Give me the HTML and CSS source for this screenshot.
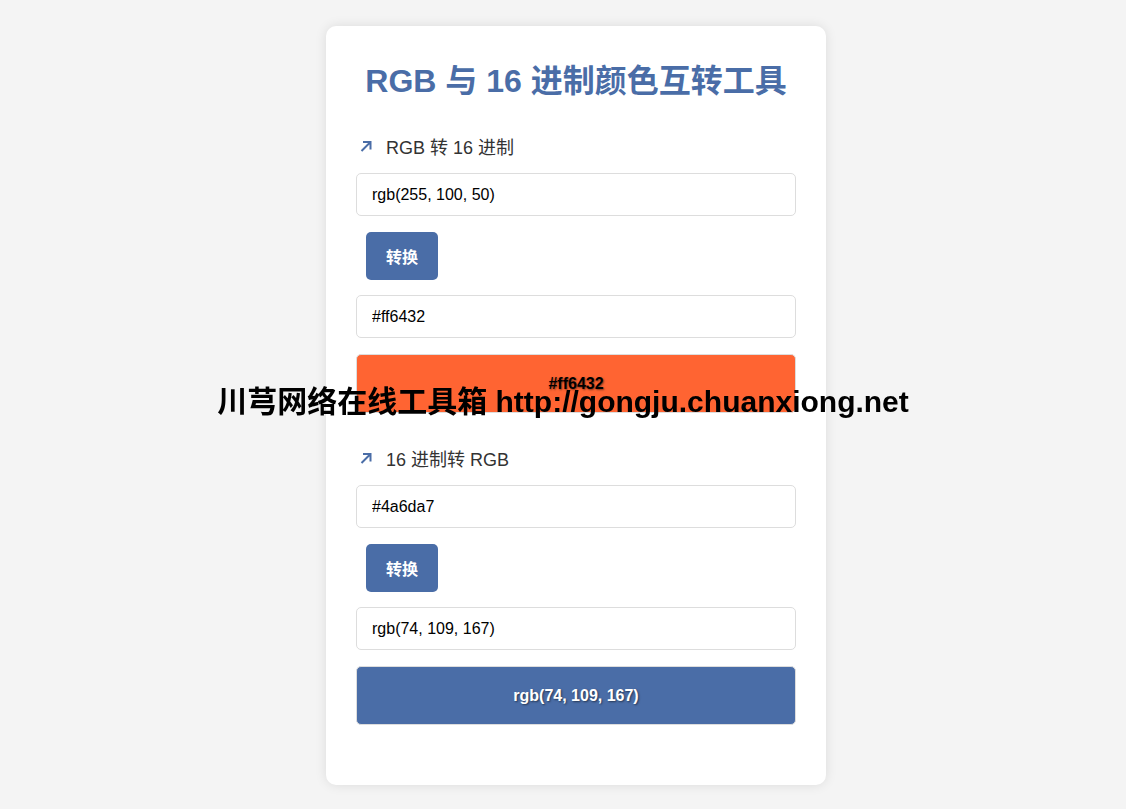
FILE: index.html
```html
<!DOCTYPE html>
<html lang="zh-CN">
<head>
  <meta charset="UTF-8" />
  <meta name="viewport" content="width=device-width, initial-scale=1" />
  <title>RGB 与 16 进制颜色互转工具</title>
  <link rel="stylesheet" href="styles.css">
</head>
<body>

<div class="container">
  <h1>RGB 与 16 进制颜色互转工具</h1>

  <!-- RGB -> HEX -->
  <div class="section">
    <div class="section-title">
      <svg class="arrow" width="12" height="12" viewBox="0 0 12 12"><path d="M1.5 11 L10.5 2 M3 2 H10.5 V9.5" fill="none" stroke="currentColor" stroke-width="2"/></svg>
      <span>RGB 转 16 进制</span>
    </div>
    <input type="text" class="field" id="rgbInput" value="rgb(255, 100, 50)">
    <button class="convert-btn" id="rgbBtn">转换</button>
    <input type="text" class="field" id="hexOutput" value="#ff6432" readonly>
    <div class="preview" id="hexPreview" style="background: #ff6432;">#ff6432</div>
  </div>

  <!-- HEX -> RGB -->
  <div class="section">
    <div class="section-title">
      <svg class="arrow" width="12" height="12" viewBox="0 0 12 12"><path d="M1.5 11 L10.5 2 M3 2 H10.5 V9.5" fill="none" stroke="currentColor" stroke-width="2"/></svg>
      <span>16 进制转 RGB</span>
    </div>
    <input type="text" class="field" id="hexInput" value="#4a6da7">
    <button class="convert-btn" id="hexBtn">转换</button>
    <input type="text" class="field" id="rgbOutput" value="rgb(74, 109, 167)" readonly>
    <div class="preview light" id="rgbPreview" style="background: #4a6da7;">rgb(74, 109, 167)</div>
  </div>
</div>

<div class="watermark">川芎网络在线工具箱 http://gongju.chuanxiong.net</div>

<script>
function toHex(n) {
  return ("0" + Number(n).toString(16)).slice(-2);
}

function isDark(r, g, b) {
  return (r * 299 + g * 587 + b * 114) / 1000 < 140;
}

function paint(box, text, r, g, b) {
  box.textContent = text;
  box.style.background = text.startsWith("#") ? text : `rgb(${r}, ${g}, ${b})`;
  box.classList.toggle("light", isDark(r, g, b));
}

document.getElementById("rgbBtn").addEventListener("click", () => {
  const m = document.getElementById("rgbInput").value.match(/\d+/g);
  if (!m || m.length < 3) return;
  const [r, g, b] = m.map(Number);
  const hex = "#" + toHex(r) + toHex(g) + toHex(b);
  document.getElementById("hexOutput").value = hex;
  paint(document.getElementById("hexPreview"), hex, r, g, b);
});

document.getElementById("hexBtn").addEventListener("click", () => {
  let hex = document.getElementById("hexInput").value.replace("#", "").trim();
  if (hex.length === 3) hex = hex.split("").map(c => c + c).join("");
  if (hex.length !== 6) return;
  const r = parseInt(hex.slice(0, 2), 16);
  const g = parseInt(hex.slice(2, 4), 16);
  const b = parseInt(hex.slice(4, 6), 16);
  const rgb = `rgb(${r}, ${g}, ${b})`;
  document.getElementById("rgbOutput").value = rgb;
  paint(document.getElementById("rgbPreview"), rgb, r, g, b);
});
</script>

</body>
</html>
```

FILE: styles.css
```css
body {
  margin: 0;
  padding-left: 26px;
  background: #f4f4f4;
  font-family: "Liberation Sans", Arial, "Noto Sans CJK SC", sans-serif;
  color: #333;
}

.container {
  width: 440px;
  margin: 26px auto;
  padding: 37px 30px 60px;
  background: #fff;
  border-radius: 10px;
  box-shadow: 0 0 12px rgba(0, 0, 0, 0.1);
}

h1 {
  margin: 0 0 34px;
  font-size: 32px;
  line-height: 37px;
  text-align: center;
  color: #4a6da7;
}

.section {
  display: flex;
  flex-direction: column;
  align-items: flex-start;
  margin-bottom: 33px;
}

.section:last-child {
  margin-bottom: 0;
}

.section-title {
  display: flex;
  align-items: center;
  height: 24px;
  margin-bottom: 15px;
  padding-left: 4px;
  font-size: 18px;
  color: #333;
}

.arrow {
  color: #4a6da7;
  margin-right: 14px;
}

.field {
  box-sizing: border-box;
  width: 100%;
  height: 43px;
  margin: 0 0 16px;
  padding: 0 15px;
  border: 1px solid #ddd;
  border-radius: 5px;
  font-family: inherit;
  font-size: 16px;
  color: #000;
  background: #fff;
  outline: none;
}

.convert-btn {
  height: 48px;
  margin: 0 0 15px 10px;
  padding: 0 20px;
  border: none;
  border-radius: 5px;
  background: #4a6da7;
  color: #fff;
  font-family: inherit;
  font-size: 16px;
  font-weight: bold;
  cursor: pointer;
}

.convert-btn:hover {
  background: #3d5b8f;
}

.preview {
  box-sizing: border-box;
  width: 100%;
  height: 59px;
  line-height: 57px;
  border: 1px solid #ddd;
  border-radius: 5px;
  text-align: center;
  font-size: 16px;
  font-weight: bold;
  color: #000;
  text-shadow: 1px 1px 2px rgba(0, 0, 0, 0.5);
}

.preview.light {
  color: #fff;
}

/* site watermark over the page */
.watermark {
  position: fixed;
  top: 50%;
  left: 50%;
  transform: translate(-50%, calc(-50% - 6px));
  white-space: nowrap;
  font-size: 30px;
  font-weight: bold;
  color: #000;
  pointer-events: none;
}
```
